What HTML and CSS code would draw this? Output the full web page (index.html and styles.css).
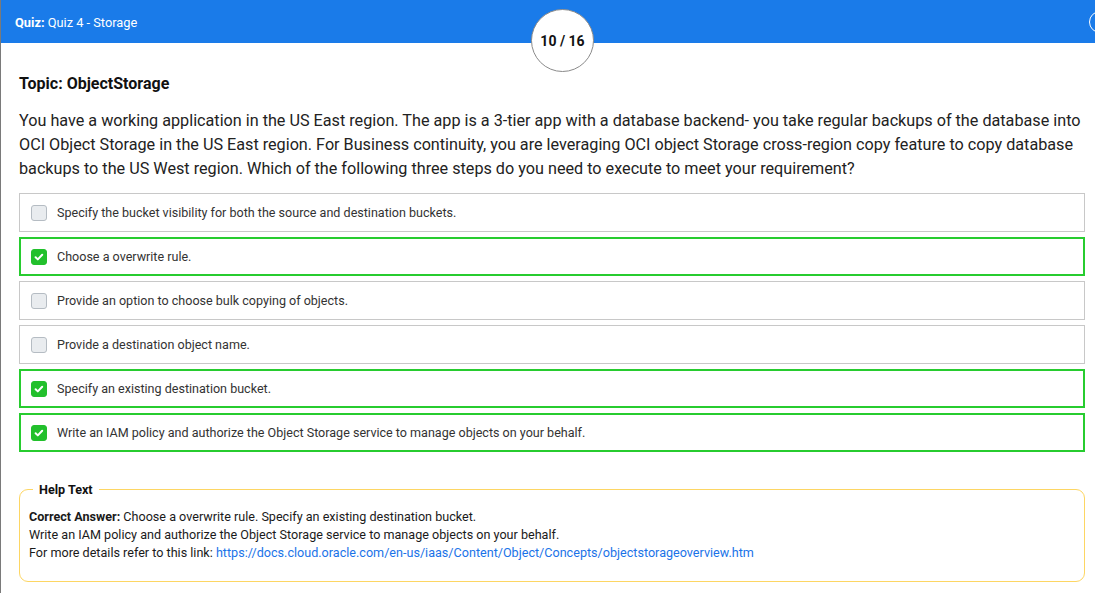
FILE: index.html
```html
<!DOCTYPE html>
<html>
<head>
<meta charset="utf-8">
<link rel="stylesheet" href="styles.css">
</head>
<body>
<div class="page">
  <header class="topbar">
    <div class="title"><b>Quiz:</b> Quiz 4 - Storage</div>
    <div class="counter">10 / 16</div>
    <div class="corner-icon"></div>
  </header>
  <main class="content">
    <h2 class="topic">Topic: ObjectStorage</h2>
    <p class="question">You have a working application in the US East region. The app is a 3-tier app with a database backend- you take regular backups of the database into OCI Object Storage in the US East region. For Business continuity, you are leveraging OCI object Storage cross-region copy feature to copy database backups to the US West region. Which of the following three steps do you need to execute to meet your requirement?</p>
    <div class="options">
      <div class="option"><span class="box"></span><span>Specify the bucket visibility for both the source and destination buckets.</span></div>
      <div class="option correct"><span class="box checked"><svg viewBox="0 0 16 16" width="16" height="16"><path d="M4.6 8.3l2.2 2.1 4.4-4.6" fill="none" stroke="#fff" stroke-width="2" stroke-linecap="round" stroke-linejoin="round"/></svg></span><span>Choose a overwrite rule.</span></div>
      <div class="option"><span class="box"></span><span>Provide an option to choose bulk copying of objects.</span></div>
      <div class="option"><span class="box"></span><span>Provide a destination object name.</span></div>
      <div class="option correct"><span class="box checked"><svg viewBox="0 0 16 16" width="16" height="16"><path d="M4.6 8.3l2.2 2.1 4.4-4.6" fill="none" stroke="#fff" stroke-width="2" stroke-linecap="round" stroke-linejoin="round"/></svg></span><span>Specify an existing destination bucket.</span></div>
      <div class="option correct"><span class="box checked"><svg viewBox="0 0 16 16" width="16" height="16"><path d="M4.6 8.3l2.2 2.1 4.4-4.6" fill="none" stroke="#fff" stroke-width="2" stroke-linecap="round" stroke-linejoin="round"/></svg></span><span>Write an IAM policy and authorize the Object Storage service to manage objects on your behalf.</span></div>
    </div>
    <fieldset class="help">
      <legend>Help Text</legend>
      <div class="help-body">
        <div><b>Correct Answer:</b> Choose a overwrite rule. Specify an existing destination bucket.</div>
        <div>Write an IAM policy and authorize the Object Storage service to manage objects on your behalf.</div>
        <div>For more details refer to this link: <a href="#">https://docs.cloud.oracle.com/en-us/iaas/Content/Object/Concepts/objectstorageoverview.htm</a></div>
      </div>
    </fieldset>
  </main>
</div>
</body>
</html>
```

FILE: styles.css
```css
* { box-sizing: border-box; }
html, body { margin: 0; padding: 0; background: #fff; }
body {
  font-family: Roboto, "Liberation Sans", Arial, sans-serif;
  color: #212529;
  overflow: hidden;
}
.page {
  border-left: 1px solid #7a7a7a;
  min-height: 593px;
  width: 1095px;
}
.topbar {
  position: relative;
  height: 43px;
  background: #1a7be9;
  color: #fff;
  display: flex;
  align-items: center;
  padding: 0 14px;
  font-size: 12.8px;
}
.title { padding-top: 2px; }
.title b { font-weight: 700; }
.counter {
  position: absolute;
  left: 530px;
  top: 9px;
  width: 63px;
  height: 63px;
  border-radius: 50%;
  background: #fff;
  border: 1px solid #8a8a8a;
  color: #111;
  font-weight: 700;
  font-size: 14px;
  display: flex;
  align-items: center;
  justify-content: center;
  z-index: 2;
}
.corner-icon {
  position: absolute;
  left: 1088px;
  top: 11px;
  width: 22px;
  height: 22px;
  border-radius: 50%;
  border: 1.5px solid #fff;
}
.content {
  padding: 0 10px 0 18px;
}
.topic {
  margin: 0;
  padding-top: 31px;
  font-size: 16px;
  font-weight: 700;
  line-height: 20px;
  color: #111;
}
.question {
  margin: 15px 0 12px;
  font-size: 16.2px;
  line-height: 24px;
  color: #222;
}
.options {
  display: flex;
  flex-direction: column;
  gap: 5px;
}
.option {
  height: 39px;
  border: 1px solid #c8c8c8;
  display: flex;
  align-items: center;
  padding-left: 11px;
  font-size: 12.55px;
  color: #333;
}
.option.correct {
  border: 2px solid #27cc2f;
  padding-left: 10px;
}
.box {
  width: 16px;
  height: 16px;
  border-radius: 3px;
  background: #e9ecef;
  border: 1px solid #b5bcc3;
  margin-right: 10px;
  flex: none;
  display: flex;
  align-items: center;
  justify-content: center;
}
.box.checked {
  background: #22c02c;
  border-color: #22c02c;
}
.box.checked svg { display: block; flex: none; margin: -1px; }
.help {
  margin: 30px 0 0;
  border: 1px solid #fdd663;
  border-radius: 9px;
  padding: 11px 9px 19px;
  min-width: 0;
}
.help legend {
  font-size: 12.6px;
  font-weight: 700;
  color: #111;
  padding: 0 6px;
  margin-left: 4px;
}
.help-body {
  font-size: 12.6px;
  line-height: 18px;
  color: #1a1a1a;
}
.help-body b { font-weight: 700; }
.help-body a { color: #1a73e8; text-decoration: none; }
```
